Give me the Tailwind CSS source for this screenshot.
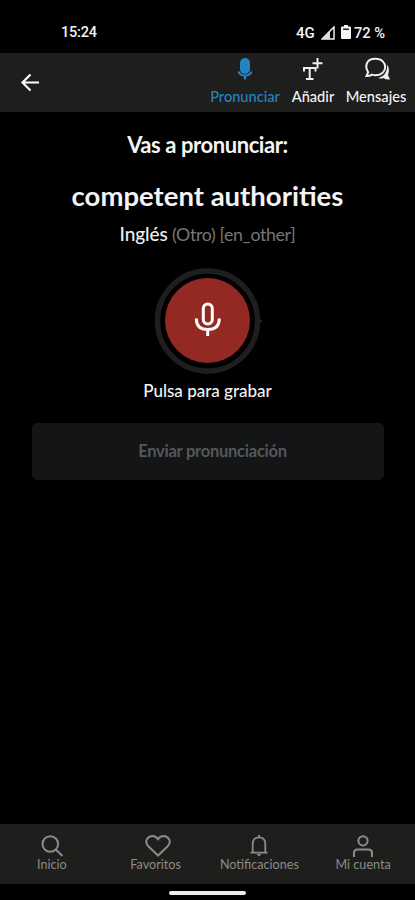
<!DOCTYPE html>
<html lang="es">
<head>
<meta charset="utf-8">
<meta name="viewport" content="width=device-width, initial-scale=1">
<title>Pronunciar</title>
<script src="https://cdn.jsdelivr.net/npm/@tailwindcss/browser@4"></script>
</head>
<body class="bg-black">
<div class="w-[415px] h-[900px] bg-black text-[#f4f4f4] font-['Lato',sans-serif] flex flex-col overflow-hidden whitespace-nowrap">
  <div class="h-[53px] shrink-0 flex items-start justify-between pt-[23px] pl-[61px] pr-[29px] font-['Roboto',sans-serif] font-medium text-[15px] leading-[20px]">
    <span class="text-[14.5px] tracking-[-0.2px]">15:24</span>
    <div class="flex items-start">
      <span class="w-[25px]">4G</span>
      <svg class="w-[14px] h-[14px] mt-[3px]" viewBox="0 0 14 14"><path d="M1 13H13V1Z" fill="none" stroke="#eee" stroke-width="1.5"/><path d="M1 13H9V5Z" fill="#ddd"/></svg>
      <svg class="w-[10px] h-[14px] ml-[6px] mt-[2px]" viewBox="0 0 10 14"><path d="M3 0H7V1.500H9Q10 1.500 10 2.500V13Q10 14 9 14H1Q0 14 0 13V2.500Q0 1.500 1 1.500H3Z" fill="#f4f4f4"/><path d="M2 3.500H8V5H2Z" fill="#222"/></svg>
      <span class="ml-[3px] w-[32px] text-[14.7px]">72 %</span>
    </div>
  </div>
  <header class="h-[59px] shrink-0 bg-[#1e1e1c] flex items-start">
    <svg class="w-[20px] h-[20px] ml-[20px] mt-[20px]" viewBox="0 0 20 20" fill="none" stroke="#fff" stroke-width="2.200"><path d="M19 9.500H2.500M10.500 1.500L2.500 9.500L10.500 17.500"/></svg>
    <div class="ml-auto pr-[8px] pt-[4px] flex text-[14.600px] leading-[18px] font-medium">
      <div class="w-[72px] flex flex-col items-center text-[#2383c4]">
        <svg class="w-[24px] h-[24px]" viewBox="0 0 24 24"><rect x="7" y="1" width="10" height="16" rx="5" fill="currentColor"/><path d="M5.500 14.500Q7 18.700 12 18.700Q17 18.700 18.500 14.500M12 18V22.500" fill="none" stroke="currentColor" stroke-width="2.200"/></svg>
        <span class="mt-[7px]">Pronunciar</span>
      </div>
      <div class="w-[64px] flex flex-col items-center">
        <svg class="w-[24px] h-[24px]" viewBox="0 0 24 24" fill="none" stroke="#eee" stroke-width="2"><path d="M3 14.500V11H14.500V14.500M8.700 11V22M5 22H12.500"/><path d="M16.500 1V11.500M11.500 6.200H21.500"/></svg>
        <span class="mt-[7px]">Añadir</span>
      </div>
      <div class="w-[62px] flex flex-col items-center">
        <svg class="w-[28px] h-[24px] ml-[4px]" viewBox="0 0 28 24"><path d="M23.500 7.500Q26 13 24 18L26 22.500Q22 23 19.500 21Q17 22 14.500 21Q23 19 23.500 7.500Z" fill="#eee"/><path d="M2.500 19L4.200 15.200C.8 10 1.500 1.800 11.500 1.800C18 1.800 21.200 6 21.200 10S18 18.200 11.500 18.200Q9.500 18.200 8 17.600Q6 19 2.500 19Z" fill="none" stroke="#eee" stroke-width="2"/></svg>
        <span class="mt-[7px]">Mensajes</span>
      </div>
    </div>
  </header>
  <main class="flex-1 flex flex-col items-center">
    <h1 class="mt-[18px] text-[22px] leading-[30px] font-bold tracking-[-0.42px]">Vas a pronunciar:</h1>
    <h2 class="mt-[18px] text-[27.500px] leading-[36px] font-bold">competent authorities</h2>
    <p class="mt-[8px] h-[24px] text-[18.500px] leading-[24px] text-[#777] tracking-[-0.35px]"><span class="text-[#f0f0f0] font-medium text-[19px] tracking-[-0.1px]">Inglés</span> <span class="text-[17.800px]">(Otro) [en_other]</span></p>
    <button class="mt-[21px] w-[107px] h-[107px] shrink-0"><svg class="w-[107px] h-[107px] overflow-visible" viewBox="0 0 107 107"><circle cx="53.500" cy="54" r="50" fill="none" stroke="#1e1e1e" stroke-width="5.500"/><circle cx="106.500" cy="54" r="1.500" fill="#222"/><circle cx="53.500" cy="106" r="1.500" fill="#1e1e1e"/><circle cx="53.500" cy="53.500" r="42.500" fill="#942822"/><g fill="none" stroke="#fff" stroke-width="3"><rect x="49.300" y="37" width="9" height="20" rx="4.500"/><path d="M42.300 51.500Q42.300 62.500 53.700 62.500Q65.300 62.500 65.300 51.500M53.700 62.500V69"/></g></svg></button>
    <p class="mt-[5px] text-[17px] leading-[24px] font-medium">Pulsa para grabar</p>
    <button class="mt-[20px] w-[352px] h-[57px] rounded-[5px] bg-[#131516] text-[#55575a] text-[16.500px] tracking-[-0.25px] font-bold pl-[10px]">Enviar pronunciación</button>
  </main>
  <nav class="h-[60px] shrink-0 bg-[#1e1e1c] grid grid-cols-4 text-[#8b8b8a] text-[12.600px] leading-[16px]">
    <div class="flex flex-col items-center pt-[10px]">
      <svg class="w-[24px] h-[24px]" viewBox="0 0 24 24" fill="none" stroke="currentColor" stroke-width="2"><circle cx="10.300" cy="10" r="7.800"/><path d="M15.800 15.500L22.500 22"/></svg>
      <span class="-mt-[1px]">Inicio</span>
    </div>
    <div class="flex flex-col items-center pt-[10px]">
      <svg class="w-[28px] h-[24px] ml-[5px]" viewBox="0 0 28 24" fill="none" stroke="currentColor" stroke-width="2"><path d="M14 21.500L4.300 12.300C-.5 7 4.200 2 8.500 2Q12 2 14 5.200Q16 2 19.500 2C23.800 2 28.500 7 23.700 12.300Z"/></svg>
      <span class="-mt-[1px]">Favoritos</span>
    </div>
    <div class="flex flex-col items-center pt-[10px]">
      <svg class="w-[24px] h-[24px]" viewBox="0 0 24 24" fill="none" stroke="currentColor" stroke-width="1.800"><path d="M3.500 18.700H20.500M5.700 18.500V10C5.700 5.500 8.500 3.300 12 3.300S18.300 5.500 18.300 10V18.500M12 1V3.500"/><path d="M9.500 20H14.500L12 22.500Z" fill="currentColor" stroke="none"/></svg>
      <span class="-mt-[1px]">Notificaciones</span>
    </div>
    <div class="flex flex-col items-center pt-[10px]">
      <svg class="w-[24px] h-[24px]" viewBox="0 0 24 24" fill="none" stroke="currentColor" stroke-width="2"><circle cx="12" cy="6.800" r="4.600"/><path d="M3 23V19Q3 15.500 6.500 15.500H17.500Q21 15.500 21 19V23"/></svg>
      <span class="-mt-[1px]">Mi cuenta</span>
    </div>
  </nav>
  <div class="h-[16px] shrink-0 flex justify-center pt-[7px]"><div class="w-[77px] h-[4px] rounded-full bg-[#eee]"></div></div>
</div>
</body>
</html>
